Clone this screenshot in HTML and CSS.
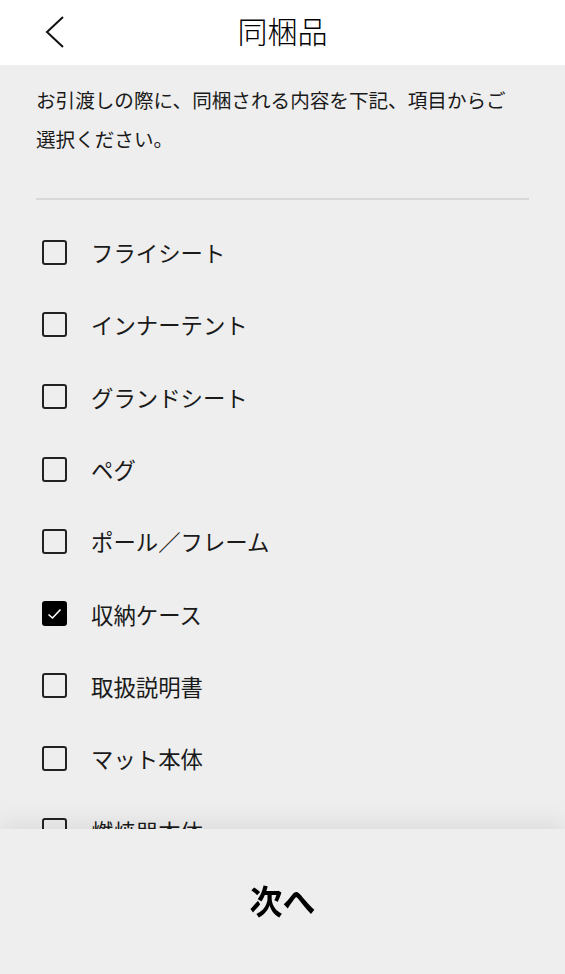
FILE: index.html
```html
<!DOCTYPE html>
<html lang="ja">
<head>
<meta charset="utf-8">
<link rel="stylesheet" href="styles.css">
</head>
<body>
<header class="header">
  <button class="back" aria-label="戻る">
    <svg width="24" height="34" viewBox="0 0 24 34"><path d="M19 2 L3 17 L19 32" fill="none" stroke="#111" stroke-width="2"/></svg>
  </button>
  <h1 class="title">同梱品</h1>
</header>
<main class="content">
  <p class="desc">お引渡しの際に、同梱される内容を下記、項目からご選択ください。</p>
  <hr class="divider">
  <ul class="list">
    <li class="item"><span class="box"></span><span class="label">フライシート</span></li>
    <li class="item"><span class="box"></span><span class="label">インナーテント</span></li>
    <li class="item"><span class="box"></span><span class="label">グランドシート</span></li>
    <li class="item"><span class="box"></span><span class="label">ペグ</span></li>
    <li class="item"><span class="box"></span><span class="label">ポール／フレーム</span></li>
    <li class="item"><span class="box checked"><svg width="15" height="12" viewBox="0 0 15 12"><path d="M1.5 6.5 L5.5 10 L13.5 1.5" fill="none" stroke="#fff" stroke-width="1.6"/></svg></span><span class="label">収納ケース</span></li>
    <li class="item"><span class="box"></span><span class="label">取扱説明書</span></li>
    <li class="item"><span class="box"></span><span class="label">マット本体</span></li>
    <li class="item"><span class="box"></span><span class="label">燃焼器本体</span></li>
  </ul>
</main>
<footer class="footer">
  <button class="next">次へ</button>
</footer>
</body>
</html>
```
FILE: styles.css
```css
* { box-sizing: border-box; }
html, body { margin: 0; padding: 0; }
body {
  width: 565px;
  height: 974px;
  overflow: hidden;
  background: #eeeeee;
  font-family: "Noto Sans CJK JP", "Noto Sans", sans-serif;
  color: #111;
}
.header {
  height: 65px;
  background: #fff;
  display: flex;
  align-items: center;
  justify-content: center;
  position: relative;
}
.back {
  position: absolute;
  left: 44px;
  top: 15px;
  padding: 0;
  border: 0;
  background: none;
  display: flex;
}
.title {
  margin: 0 0 5px;
  font-size: 30px;
  font-weight: 300;
  line-height: 1;
  color: #000;
}
.content {
  padding: 15px 36px 0;
}
.desc {
  margin: 0;
  max-width: 480px;
  font-size: 19.6px;
  line-height: 39px;
  color: #1a1a1a;
}
.divider {
  border: 0;
  height: 2px;
  background: #d8d8d8;
  margin: 40px 0 16px;
}
.list {
  list-style: none;
  margin: 0;
  padding: 0;
}
.item {
  height: 72.3px;
  display: flex;
  align-items: center;
  padding-left: 6px;
  gap: 24px;
}
.box {
  width: 25px;
  height: 25px;
  border: 2px solid #222;
  border-radius: 3px;
  display: flex;
  align-items: center;
  justify-content: center;
  flex: none;
}
.box.checked {
  background: #000;
  border-color: #000;
}
.label {
  font-size: 22.4px;
  color: #1a1a1a;
}
.footer {
  position: fixed;
  left: 0;
  bottom: 0;
  width: 565px;
  height: 145px;
  background: #eeeeee;
  box-shadow: 0 -8px 22px rgba(0,0,0,0.07);
  display: flex;
  align-items: center;
  justify-content: center;
}
.next {
  border: 0;
  background: none;
  font-family: inherit;
  font-size: 33px;
  font-weight: 700;
  color: #000;
  padding: 0;
  margin-bottom: 4px;
}
```
